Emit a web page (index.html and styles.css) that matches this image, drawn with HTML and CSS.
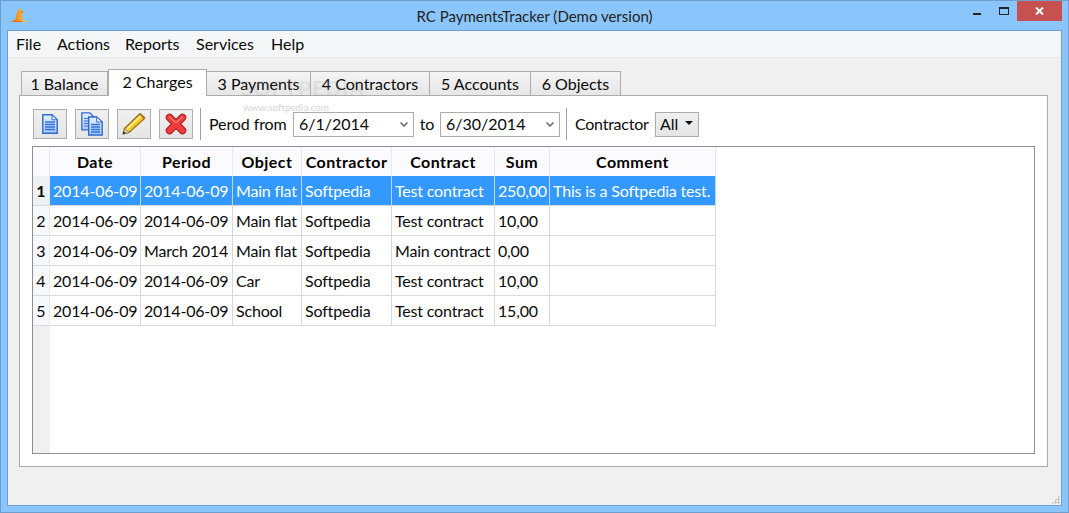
FILE: index.html
```html
<!DOCTYPE html>
<html lang="en">
<head>
<meta charset="utf-8">
<title>RC PaymentsTracker (Demo version)</title>
<link rel="stylesheet" href="styles.css">
</head>
<body>
<div class="window">
  <header class="titlebar">
    <svg class="app-icon" width="17" height="16" viewBox="0 0 17 16"><defs><linearGradient id="roo" x1="0" y1="0" x2="1" y2="0"><stop offset="0" stop-color="#f08a12"/><stop offset="1" stop-color="#fdc45a"/></linearGradient></defs><path d="M8.500 1L10 3.500 11 1.500 12 4l2.500 1.500L13 7h-1.500l1 3-.5 3 4.500.5-.5 1.500H6l-1-2 1-4z" fill="url(#roo)"/><path d="M0 15l5-2 2 1 5 0v1z" fill="#ee6a14"/><circle cx="12" cy="5" r=".7" fill="#555"/></svg>
    <div class="title">RC PaymentsTracker (Demo version)</div>
    <div class="controls">
      <svg class="ctl-min" width="8" height="2"><rect width="8" height="2" fill="#222"/></svg>
      <svg class="ctl-max" width="10" height="8"><rect x=".5" y=".5" width="9" height="7" fill="none" stroke="#222"/><rect width="10" height="2" fill="#222"/></svg>
      <div class="ctl-close"><svg width="9" height="8" viewBox="0 0 9 8"><path d="M1 .5l7 7M8 .5l-7 7" stroke="#fff" stroke-width="2"/></svg></div>
    </div>
  </header>
  <div class="client">
    <nav class="menubar">
      <span class="m1">File</span><span class="m2">Actions</span><span class="m3">Reports</span><span class="m4">Services</span><span>Help</span>
    </nav>
    <main class="content">
      <div class="tabs">
        <div class="tab t1">1 Balance</div>
        <div class="tab t2 active">2 Charges</div>
        <div class="tab t3">3 Payments</div>
        <div class="tab t4">4 Contractors</div>
        <div class="tab t5">5 Accounts</div>
        <div class="tab t6">6 Objects</div>
        <div class="wm-big">SOFTPEDIA</div>
        <div class="wm-small">www.softpedia.com</div>
      </div>
      <section class="panel">
        <div class="toolbar">
          <button class="tool">
            <svg width="16" height="20" viewBox="0 0 16 20"><defs><linearGradient id="doc" x1="0" y1="0" x2="0" y2="1"><stop offset="0" stop-color="#e4efff"/><stop offset="1" stop-color="#a9c9f8"/></linearGradient></defs><path d="M.8.800h9.200l5.200 5v13.400H.8z" fill="url(#doc)" stroke="#2f68cf" stroke-width="1.400"/><path d="M10 .800v5h5.200z" fill="#f4f8ff" stroke="#2f68cf"/><path d="M3 8h10M3 10.500h10M3 13h10M3 15.500h10" stroke="#2f6fdc" stroke-width="1.300"/></svg>
          </button>
          <button class="tool">
            <svg width="22" height="24" viewBox="0 0 22 24"><path d="M.8.800h8l4 4v13H.8z" fill="url(#doc)" stroke="#2f68cf" stroke-width="1.300"/><path d="M3 6.500h7M3 9h7M3 11.500h7M3 14h7" stroke="#2f6fdc"/><path d="M7.700 5h8l5.500 5v13H7.700z" fill="url(#doc)" stroke="#2f68cf" stroke-width="1.400"/><path d="M15.700 5v5h5.500z" fill="#f4f8ff" stroke="#2f68cf"/><path d="M10 12.500h9M10 15h9M10 17.500h9M10 20h9" stroke="#2f6fdc" stroke-width="1.300"/></svg>
          </button>
          <button class="tool">
            <svg width="24" height="22" viewBox="0 0 24 22"><path d="M1 21l1.500-5.500L17.500 1l5 4.500L7 19.500z" fill="#f2c92e" stroke="#8f6f14" stroke-width="1.200" stroke-linejoin="round"/><path d="M5 16L19 3" stroke="#fdeb8c" stroke-width="1.800"/><path d="M8 18L21 6" stroke="#d79e1c" stroke-width="1"/><path d="M17.500 1l1-.5 4.500 4-.5 1z" fill="#d98a3a" stroke="#8f6f14" stroke-width=".8"/><path d="M2.500 15.500L7 19.500 1 21z" fill="#e8d4a8" stroke="#77705f" stroke-width=".7"/><path d="M1 21l.7-2.800 2.300 2z" fill="#222"/></svg>
          </button>
          <button class="tool">
            <svg width="22" height="22" viewBox="0 0 22 22"><path d="M4.500 4.500l13 13M17.500 4.500l-13 13" stroke="#a81a1a" stroke-width="7.500" stroke-linecap="round"/><path d="M4.500 4.500l13 13M17.500 4.500l-13 13" stroke="#f03c3c" stroke-width="5.500" stroke-linecap="round"/><path d="M4 3.700l7 5.800 7-5.800" fill="none" stroke="#ff9a9a" stroke-width="1"/></svg>
          </button>
          <div class="sep"></div>
          <label class="lbl lbl-from">Perod from</label>
          <div class="combo c-from">6/1/2014<svg class="chev" width="8" height="5" viewBox="0 0 8 5"><path d="M.5.500L4 4 7.500.500" fill="none" stroke="#666" stroke-width="1.500"/></svg></div>
          <label class="lbl lbl-to">to</label>
          <div class="combo c-to">6/30/2014<svg class="chev" width="8" height="5" viewBox="0 0 8 5"><path d="M.5.500L4 4 7.500.500" fill="none" stroke="#666" stroke-width="1.500"/></svg></div>
          <div class="sep sep2"></div>
          <label class="lbl lbl-con">Contractor</label>
          <div class="drop">All<span class="caret"></span></div>
        </div>
        <div class="grid">
          <table>
            <colgroup>
              <col class="c0"><col class="c1"><col class="c2"><col class="c3"><col class="c4"><col class="c5"><col class="c6"><col class="c7">
            </colgroup>
            <thead>
              <tr><th class="corner"></th><th>Date</th><th>Period</th><th>Object</th><th>Contractor</th><th>Contract</th><th>Sum</th><th>Comment</th></tr>
            </thead>
            <tbody>
              <tr class="sel"><th>1</th><td>2014-06-09</td><td>2014-06-09</td><td>Main flat</td><td>Softpedia</td><td>Test contract</td><td>250,00</td><td>This is a Softpedia test.</td></tr>
              <tr><th>2</th><td>2014-06-09</td><td>2014-06-09</td><td>Main flat</td><td>Softpedia</td><td>Test contract</td><td>10,00</td><td></td></tr>
              <tr><th>3</th><td>2014-06-09</td><td>March 2014</td><td>Main flat</td><td>Softpedia</td><td>Main contract</td><td>0,00</td><td></td></tr>
              <tr><th>4</th><td>2014-06-09</td><td>2014-06-09</td><td>Car</td><td>Softpedia</td><td>Test contract</td><td>10,00</td><td></td></tr>
              <tr><th>5</th><td>2014-06-09</td><td>2014-06-09</td><td>School</td><td>Softpedia</td><td>Test contract</td><td>15,00</td><td></td></tr>
            </tbody>
          </table>
        </div>
      </section>
    </main>
    <div class="grip"></div>
  </div>
</div>
</body>
</html>
```
FILE: styles.css
```css
* { box-sizing: border-box; }
html, body { margin: 0; height: 100%; }
body { font-family: Lato, "Noto Sans", sans-serif; font-size: 16px; color: #0a0a0a; overflow: hidden; }
.window { width: 1069px; height: 513px; background: #8ac6fb; border: 1px solid #6e9fcc; display: flex; flex-direction: column; padding: 0 6px 6px 6px; }
.titlebar { height: 29px; flex: none; display: flex; align-items: center; position: relative; }
.app-icon { position: absolute; left: 3px; top: 6px; }
.title { flex: 1; text-align: center; font-size: 15px; color: #222; padding-top: 1px; }
.controls { position: absolute; right: 0; top: 0; display: flex; align-items: flex-start; }
.ctl-min { margin-top: 12px; margin-right: 18px; }
.ctl-max { margin-top: 6px; margin-right: 8px; }
.ctl-close { width: 45px; height: 20px; background: #c75050; display: flex; align-items: center; justify-content: center; }
.client { flex: 1; background: #f0f0f0; border: 1px solid #6e9fcc; display: flex; flex-direction: column; position: relative; min-height: 0; }
.menubar { height: 27px; flex: none; background: #f5f6f7; border-bottom: 1px solid #e8e9ea; display: flex; align-items: center; padding: 0 0 2px 8px; }
.m1 { width: 41px; } .m2 { width: 68px; } .m3 { width: 71px; } .m4 { width: 75px; }
.content { flex: 1; padding: 11px 13px 38px 11px; display: flex; flex-direction: column; min-height: 0; }
.tabs { height: 27px; flex: none; display: flex; align-items: flex-end; padding-left: 2px; position: relative; margin-bottom: -1px; }
.tab { height: 25px; border: 1px solid #acacac; border-left: 0; background: linear-gradient(#f4f4f4, #e6e6e6); display: flex; align-items: center; justify-content: center; padding-bottom: 1px; }
.t1 { width: 87px; border-left: 1px solid #acacac; }
.t2 { width: 99px; }
.t3 { width: 104px; }
.t4 { width: 119px; }
.t5 { width: 101px; }
.t6 { width: 90px; }
.tab.active { height: 27px; background: #fff; border-bottom: 0; position: relative; z-index: 2; border-left: 1px solid #acacac; padding-bottom: 3px; }
.wm-big { position: absolute; left: 222px; top: 6px; font-size: 21px; font-weight: 700; letter-spacing: 1px; color: rgba(150,150,150,.16); z-index: 3; pointer-events: none; }
.wm-small { position: absolute; left: 224px; top: 32px; font-size: 10px; letter-spacing: -.1px; color: rgba(120,120,120,.35); z-index: 3; }
.panel { flex: 1; background: #fff; border: 1px solid #acacac; padding: 12px 12px 12px 12px; display: flex; flex-direction: column; min-height: 0; }
.toolbar { height: 32px; flex: none; display: flex; align-items: center; padding-left: 1px; margin-bottom: 6px; }
.tool { width: 34px; height: 30px; padding: 0; margin: 0 8px 0 0; background: linear-gradient(#f0f0f0, #e5e5e5); border: 1px solid #adadad; display: flex; align-items: center; justify-content: center; }
.tool + .sep { margin-left: -1px; }
.sep { width: 1px; height: 32px; background: #a0a0a0; margin: 0 8px 0 0; }
.lbl { white-space: nowrap; padding-bottom: 2px; letter-spacing: -.1px; }
.lbl-from { width: 84px; }
.lbl-to { width: 26px; text-align: center; }
.lbl-con { width: 80px; letter-spacing: -.25px; }
.sep2 { margin-left: 6px; }
.combo { width: 120px; height: 25px; background: #fff; border: 1px solid #acacac; display: flex; align-items: center; justify-content: space-between; padding: 0 5px 2px; }
.c-from { width: 121px; }
.chev { margin-top: 2px; }
.drop { width: 44px; height: 25px; background: linear-gradient(#f0f0f0, #e5e5e5); border: 1px solid #acacac; display: flex; align-items: center; padding: 0 0 2px 4px; gap: 7px; }
.caret { width: 0; height: 0; border: 4px solid transparent; border-top-color: #111; border-bottom: 0; }
.grid { flex: 1; border: 1px solid #8c8f96; min-height: 0; background: linear-gradient(90deg, #f0f0f0 17px, #fff 17px); overflow: hidden; }
table { border-collapse: separate; border-spacing: 0; table-layout: fixed; width: 683px; }
.c0 { width: 17px; } .c1 { width: 91px; } .c2 { width: 92px; } .c3 { width: 69px; }
.c4 { width: 90px; } .c5 { width: 103px; } .c6 { width: 55px; } .c7 { width: 166px; }
thead th { height: 29px; background: #fbfbfd; border-right: 1px solid #e3e9f5; font-weight: 700; letter-spacing: .45px; text-align: center; padding: 0; color: #000; }
tbody th { height: 30px; background: #f6f8fc; border-right: 1px solid #e3e9f5; border-bottom: 1px solid #d9d9d9; font-weight: 400; text-align: center; padding: 0; }
tbody td { height: 30px; border-right: 1px solid #d9d9d9; border-bottom: 1px solid #d9d9d9; padding: 0 0 0 3px; white-space: nowrap; overflow: hidden; background: #fff; letter-spacing: -.18px; }
tbody tr.sel td { background: #3399ff; color: #fff; border-right-color: #b9daf9; }
tbody tr.sel th { font-weight: 700; background: #eef0f2; }
.grip { position: absolute; right: 1px; bottom: 1px; width: 9px; height: 9px; background-image: radial-gradient(circle, #c6c6c6 1.2px, transparent 1.3px); background-size: 3px 3px; clip-path: polygon(100% 0, 100% 100%, 0 100%); }
```
